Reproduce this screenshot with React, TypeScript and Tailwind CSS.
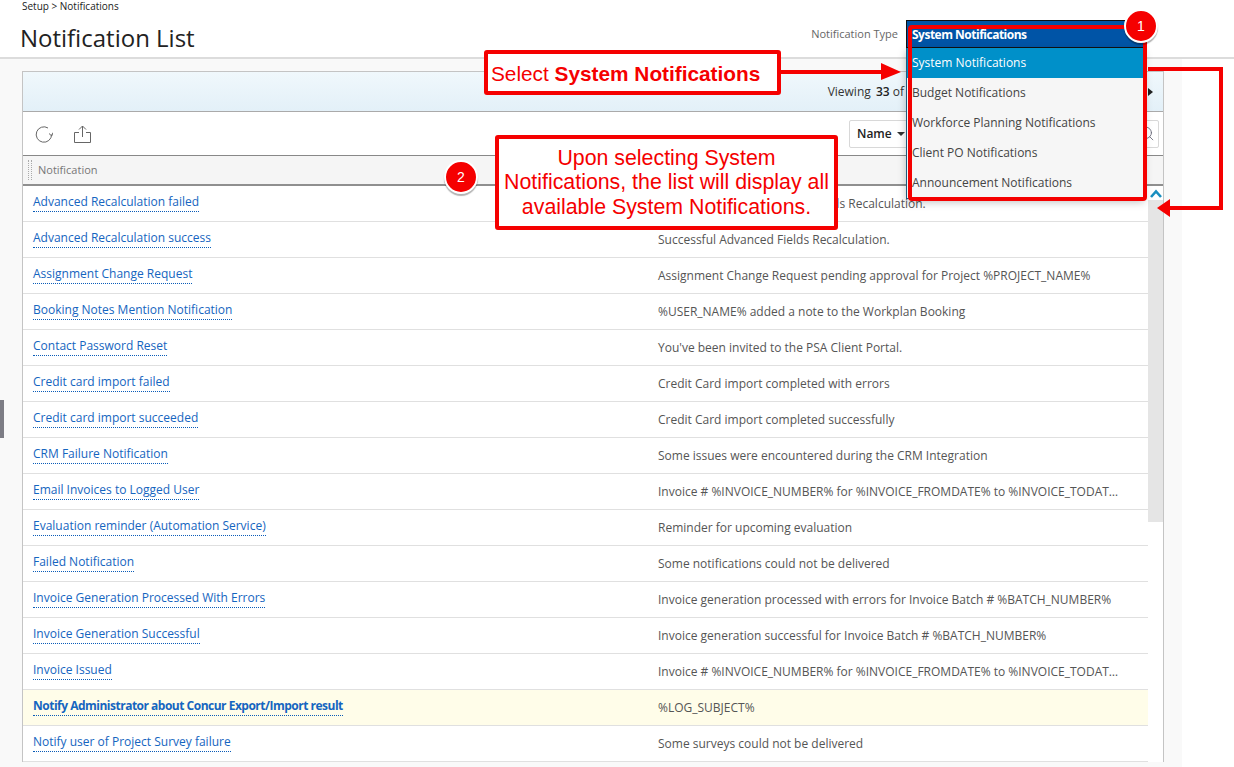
import { Search } from 'lucide-react'

const rows = [
  ['Advanced Recalculation failed', 'Failed to process Advanced Fields Recalculation.'],
  ['Advanced Recalculation success', 'Successful Advanced Fields Recalculation.'],
  ['Assignment Change Request', 'Assignment Change Request pending approval for Project %PROJECT_NAME%'],
  ['Booking Notes Mention Notification', '%USER_NAME% added a note to the Workplan Booking'],
  ['Contact Password Reset', "You've been invited to the PSA Client Portal."],
  ['Credit card import failed', 'Credit Card import completed with errors'],
  ['Credit card import succeeded', 'Credit Card import completed successfully'],
  ['CRM Failure Notification', 'Some issues were encountered during the CRM Integration'],
  ['Email Invoices to Logged User', 'Invoice # %INVOICE_NUMBER% for %INVOICE_FROMDATE% to %INVOICE_TODATE%'],
  ['Evaluation reminder (Automation Service)', 'Reminder for upcoming evaluation'],
  ['Failed Notification', 'Some notifications could not be delivered'],
  ['Invoice Generation Processed With Errors', 'Invoice generation processed with errors for Invoice Batch # %BATCH_NUMBER%'],
  ['Invoice Generation Successful', 'Invoice generation successful for Invoice Batch # %BATCH_NUMBER%'],
  ['Invoice Issued', 'Invoice # %INVOICE_NUMBER% for %INVOICE_FROMDATE% to %INVOICE_TODATE%'],
  ['Notify Administrator about Concur Export/Import result', '%LOG_SUBJECT%'],
  ['Notify user of Project Survey failure', 'Some surveys could not be delivered'],
]

const options = ['Budget Notifications', 'Workforce Planning Notifications', 'Client PO Notifications', 'Announcement Notifications']

function Badge({ n, className }: { n: number; className: string }) {
  return (
    <div className={`absolute flex h-[34px] w-[34px] items-center justify-center rounded-full border-2 border-white bg-[#f50000] text-[14px] text-white shadow-[0_2px_1px_rgba(0,0,0,0.3)] font-['Liberation_Sans',sans-serif] ${className}`}>
      {n}
    </div>
  )
}

export default function App() {
  return (
    <div className="relative h-[767px] w-[1234px] overflow-hidden bg-white font-['Open_Sans',sans-serif] text-[12px] text-[#444]">
      {/* page header */}
      <header className="flex h-[59px] items-start justify-between border-b-2 border-[#dcdcdc] pl-[20px]">
        <div>
          <div className="pl-[2px] text-[10px] leading-[13px] text-[#222]">Setup &gt; Notifications</div>
          <h1 className="mt-[8px] text-[24px] leading-[33px] text-[#222]">Notification List</h1>
        </div>
        <div className="mr-[90px] mt-[20px] flex items-start">
          <span className="mr-[8px] mt-[6px] text-[11px] leading-[16px] text-[#666]">Notification Type</span>
          <div className="relative z-10 w-[238px]">
            <div className="h-[28px] border border-[#111] bg-[#0054a6] pl-[5px] text-[12px] font-bold leading-[28px] tracking-[-0.5px] text-white">
              System Notifications
            </div>
            <div className="border-x border-b border-[#1c5a7c] bg-[#f6f6f6] shadow-[0_3px_8px_rgba(0,0,0,0.25)]">
              <div className="h-[30px] bg-[#0090c9] pl-[5px] text-[12px] leading-[30px] text-white">System Notifications</div>
              {options.map((o) => (
                <div key={o} className="h-[30px] pl-[5px] text-[12px] leading-[30px] text-[#444]">{o}</div>
              ))}
            </div>
          </div>
        </div>
      </header>

      {/* grey page body */}
      <div className="h-[708px] w-[1182px] bg-[#f9f9f9] pl-[22px] pt-[12px]">
        <div className="w-[1142px] border-x border-t border-[#c4c4c4] bg-white">
          <div className="flex h-[40px] items-center justify-end border-b border-[#aaa] bg-gradient-to-b from-[#f0f8fc] to-[#e3f0f8] pr-[10px] text-[12px] text-[#333]">
            <span className="mr-[244px] whitespace-nowrap">
              Viewing <span className="ml-[2px] font-semibold text-[#222]">33</span> of
            </span>
            <span className="h-0 w-0 border-y-[4px] border-l-[5px] border-y-transparent border-l-[#222]" />
          </div>

          <div className="flex h-[44px] items-center justify-between border-b border-[#888]">
            <div className="flex items-center gap-[21px] pl-[12px]">
              <svg width="18" height="18" viewBox="0 0 18 18" fill="none" stroke="#666" strokeWidth="1">
                <path d="M13 3A7.7 7.7 0 1 0 16.6 9.5" />
                <path d="M14 8.5L16.7 11L18 7.6" />
              </svg>
              <svg width="17" height="18" viewBox="0 0 17 18" fill="none" stroke="#666" strokeWidth="1">
                <path d="M5 7.5H0.5V17.5H16.5V7.5H12" />
                <path d="M8.5 12V1M5 4.5L8.5 1L12 4.5" />
              </svg>
            </div>
            <div className="mr-[4px] flex h-[28px] w-[310px] items-center justify-between rounded-[2px] border border-[#d8d8d8] pr-[3px]">
              <span className="flex items-center pl-[7px] text-[12px] font-semibold text-[#222]">
                Name
                <span className="ml-[5px] h-0 w-0 border-x-[4px] border-t-[4px] border-x-transparent border-t-[#333]" />
              </span>
              <Search size={17} strokeWidth={1.2} className="text-[#667]" />
            </div>
          </div>

          <div className="flex h-[30px] items-center border-b-2 border-[#8f8f8f] bg-[#f5f5f5] text-[11px] text-[#777]">
            <span className="ml-[5px] mr-[6px] h-[20px] w-[4px] border-x border-dotted border-[#aaa]" />
            Notification
          </div>

          <div className="flex">
            <div className="w-[1125px]">
              {rows.map(([name, subject], i) => (
                <div
                  key={name}
                  className={`flex h-[36px] border-b border-[#e0e0e0] ${i === 14 ? 'bg-[#fffde9]' : ''}`}
                >
                  <div className="w-[626px] pl-[10px] pt-[7px]">
                    <span className={`border-b border-dotted border-[#0a5cb8] pb-px text-[12px] leading-[16px] text-[#1565c0] ${i === 14 ? 'font-bold tracking-[-0.5px]' : ''}`}>
                      {name}
                    </span>
                  </div>
                  <div className="w-[471px] truncate pl-[9px] pt-[10px] text-[12px] leading-[16px] text-[#555]">
                    {subject}
                  </div>
                </div>
              ))}
            </div>
            {/* scrollbar */}
            <div className="w-[15px]">
              <div className="flex h-[14px] items-center justify-center bg-white">
                <svg width="12" height="9" viewBox="0 0 12 9" fill="none" stroke="#1a8fc0" strokeWidth="2.6">
                  <path d="M1 8L6 2.5L11 8" />
                </svg>
              </div>
              <div className="h-[322px] bg-[#e5e5e5]" />
            </div>
          </div>
        </div>
      </div>

      {/* left edge tab */}
      <div className="absolute left-0 top-[400px] h-[38px] w-[4px] bg-[#7d7d85]" />

      {/* annotations */}
      <div className="absolute left-[908px] top-[25px] z-20 h-[176px] w-[239px] rounded-[4px] border-4 border-[#f50000]" />
      <Badge n={1} className="left-[1124px] top-[9px] z-30" />
      <Badge n={2} className="left-[444px] top-[160px] z-30" />

      <div className="absolute left-[484px] top-[50px] z-20 flex h-[45px] w-[297px] items-center rounded-[3px] border-4 border-[#f50000] bg-white pl-[3px] pt-[2px] text-[20.8px] text-[#f50000] font-['Liberation_Sans',sans-serif]">
        Select&nbsp;<b>System Notifications</b>
      </div>
      <div className="absolute left-[495px] top-[135px] z-20 flex h-[95px] w-[343px] items-center justify-center rounded-[3px] border-4 border-[#f50000] bg-white text-center text-[21.33px] leading-[24.5px] text-[#f50000] font-['Liberation_Sans',sans-serif]">
        <div>
          Upon selecting System<br />
          Notifications, the list will display all<br />
          available System Notifications.
        </div>
      </div>

      {/* arrows */}
      <svg className="absolute left-0 top-0 z-20" width="1234" height="767">
        <path d="M781 72H885" stroke="#f50000" strokeWidth="4" fill="none" />
        <path d="M881 63L901 72L881 80Z" fill="#f50000" />
        <path d="M1148 69H1221V208H1170" stroke="#f50000" strokeWidth="4" fill="none" />
        <path d="M1170 199L1157 208L1170 217Z" fill="#f50000" />
      </svg>
    </div>
  )
}
